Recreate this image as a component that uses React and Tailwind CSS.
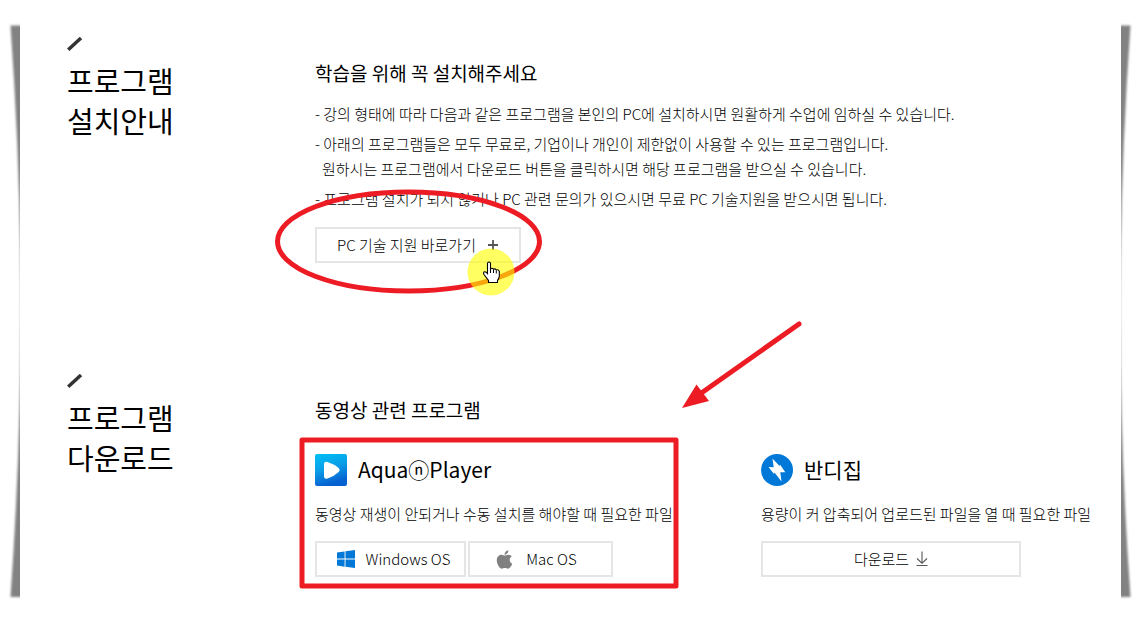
import React from "react";
import { FaApple } from "react-icons/fa";

const notices = [
  ["- 강의 형태에 따라 다음과 같은 프로그램을 본인의 PC에 설치하시면 원활하게 수업에 임하실 수 있습니다."],
  [
    "- 아래의 프로그램들은 모두 무료로, 기업이나 개인이 제한없이 사용할 수 있는 프로그램입니다.",
    "원하시는 프로그램에서 다운로드 버튼을 클릭하시면 해당 프로그램을 받으실 수 있습니다.",
  ],
  ["- 프로그램 설치가 되지 않거나 PC 관련 문의가 있으시면 무료 PC 기술지원을 받으시면 됩니다."],
];

const WindowsIcon = () => (
  <svg width="18" height="18" viewBox="0 0 18 18" fill="#0078d7" aria-hidden="true">
    <path d="M0 2.5 7.6 1.4V8.6H0zM8.5 1.3 18 0V8.6H8.5zM0 9.5H7.6V16.7L0 15.6zM8.5 9.5H18V18L8.5 16.8z" />
  </svg>
);

const PlayerIcon = () => (
  <svg width="32" height="32" viewBox="0 0 32 32" aria-hidden="true">
    <defs>
      <linearGradient id="player" x1="0" y1="0" x2="0.3" y2="1">
        <stop offset="0" stopColor="#00c0f4" />
        <stop offset="0.5" stopColor="#0a9fe8" />
        <stop offset="1" stopColor="#0560d0" />
      </linearGradient>
    </defs>
    <rect width="32" height="32" rx="2" fill="url(#player)" />
    <path d="M9 10.5Q9 7 12.5 8Q19 10 23.600 14Q25.600 16 23.600 18Q19 22.500 12.500 24.500Q9 25.500 9 22Z" fill="#fff" />
  </svg>
);

const BandizipIcon = () => (
  <svg width="32" height="32" viewBox="0 0 32 32" aria-hidden="true">
    <circle cx="16" cy="16" r="16" fill="#0078d7" />
    <path d="M11.500 4.500 18.500 12 19 10.500 24.300 18.300 19.300 18.300 20.500 27.500 13.500 18.500 13 20 7.500 13 12.700 13.300Z" fill="#fff" />
  </svg>
);

const DownloadIcon = () => (
  <svg width="12" height="16" viewBox="0 0 12 16" fill="none" stroke="#555" strokeWidth="1.1" aria-hidden="true">
    <path d="M6 0.500V12M1 7.500 6 12.300 11 7.500M0.500 14.500H11.500" />
  </svg>
);

const SectionTitle = ({ lines }) => (
  <div className="w-[248px] shrink-0">
    <svg width="16" height="14" viewBox="0 0 16 14" className="mb-[9px]" aria-hidden="true">
      <path d="M1.200 12.700 14 1" stroke="#333" strokeWidth="3.500" />
    </svg>
    <h2 className="text-[29px] leading-10 text-black">
      {lines.map((line) => (
        <span key={line} className="block">
          {line}
        </span>
      ))}
    </h2>
  </div>
);

const OutlineLink = ({ className, children }) => (
  <a
    href="#"
    className={`flex h-9 items-center justify-center border-2 border-[#e5e5e5] text-[15px] font-light text-black ${className}`}
  >
    {children}
  </a>
);

const Program = ({ icon, name, description, children }) => (
  <div>
    <h4 className="flex h-8 items-center gap-[11px] text-[21px] text-black">
      {icon}
      {name}
    </h4>
    <p className="mt-[15px] text-[15px] leading-[25px] font-light whitespace-nowrap text-black">{description}</p>
    <div className="mt-[15px] flex gap-[2px]">{children}</div>
  </div>
);

// tapered page shadow, wide at both ends
const EdgeShadow = ({ className }) => (
  <svg
    className={`absolute top-5 h-[586px] w-5 ${className}`}
    viewBox="0 0 20 586"
    preserveAspectRatio="none"
    aria-hidden="true"
  >
    <defs>
      <filter id="soft" x="-50%" y="-5%" width="200%" height="110%">
        <feGaussianBlur stdDeviation="1.3" />
      </filter>
    </defs>
    <path d="M10.500 5.500H34V577H10.500Q31 291 10.500 5.500Z" fill="#828282" filter="url(#soft)" />
  </svg>
);

const Annotations = () => (
  <svg className="pointer-events-none absolute top-0 left-0" width="1141" height="622" fill="none" aria-hidden="true">
    <ellipse cx="408.500" cy="241.500" rx="131" ry="49.500" stroke="#ed1c24" strokeWidth="5" />
    <circle cx="491" cy="272" r="23.500" fill="#ffff00" fillOpacity="0.62" />
    <rect x="302" y="440" width="374" height="146" stroke="#ed1c24" strokeWidth="5" strokeLinejoin="round" />
    <path d="M799 324 700 394" stroke="#ed1c24" strokeWidth="5" strokeLinecap="round" />
    <path d="M682 408 696.500 384.500 709 401Z" fill="#ed1c24" />
    <path
      d="M487.500 263Q489 261 490.500 263V269Q492 267.500 493.500 269.200Q495 268.200 496.300 270Q498.500 269 499.300 271.500V276Q499 279 497.500 280.500V282.500H488.500V280.500L484 274.500Q483 272.500 484.500 271.800Q486 271.500 487.500 273.500Z"
      fill="#fff"
      stroke="#000"
      strokeWidth="1.100"
    />
    <path d="M490.500 269V273M493.500 269.500V273M496.300 270.500V273.500" stroke="#000" />
  </svg>
);

const App = () => {
  return (
    <div className="relative min-h-screen overflow-hidden bg-white font-['Noto_Sans_CJK_KR',sans-serif]">
      <EdgeShadow className="left-0" />
      <EdgeShadow className="right-0 -scale-x-100" />

      <main className="pt-[37px] pr-12 pb-11 pl-[67px]">
        <section className="flex">
          <SectionTitle lines={["프로그램", "설치안내"]} />
          <div className="pt-[22px]">
            <h3 className="text-[19px] leading-[27px] text-black">학습을 위해 꼭 설치해주세요</h3>
            <ul className="mt-[15px] flex flex-col gap-[5px] text-[15px] leading-[25px] font-light text-black">
              {notices.map(([first, second]) => (
                <li key={first}>
                  <p>{first}</p>
                  {second && <p className="pl-[7px]">{second}</p>}
                </li>
              ))}
            </ul>
            <OutlineLink className="mt-4 w-[206px] gap-3 pr-px">
              PC 기술 지원 바로가기
              <svg width="10" height="10" viewBox="0 0 10 10" stroke="#555" strokeWidth="1.800" aria-hidden="true">
                <path d="M5 0V10M0 5H10" />
              </svg>
            </OutlineLink>
          </div>
        </section>

        <section className="mt-[111px] flex">
          <SectionTitle lines={["프로그램", "다운로드"]} />
          <div className="grow pt-[22px]">
            <h3 className="text-[19px] leading-[27px] text-black">동영상 관련 프로그램</h3>
            <div className="mt-[31px] grid grid-cols-[446fr_332fr]">
              <Program
                icon={<PlayerIcon />}
                name="AquaⓝPlayer"
                description="동영상 재생이 안되거나 수동 설치를 해야할 때 필요한 파일"
              >
                <OutlineLink className="w-[151px] gap-[11px] pl-[6px]">
                  <WindowsIcon />
                  Windows OS
                </OutlineLink>
                <OutlineLink className="w-[145px] gap-[11px] pr-[10px]">
                  <FaApple className="text-[21px] text-[#808080]" />
                  Mac OS
                </OutlineLink>
              </Program>
              <Program
                icon={<BandizipIcon />}
                name="반디집"
                description="용량이 커 압축되어 업로드된 파일을 열 때 필요한 파일"
              >
                <OutlineLink className="w-[260px] gap-[7px]">
                  다운로드
                  <DownloadIcon />
                </OutlineLink>
              </Program>
            </div>
          </div>
        </section>
      </main>

      <Annotations />
    </div>
  );
};

export default App;
